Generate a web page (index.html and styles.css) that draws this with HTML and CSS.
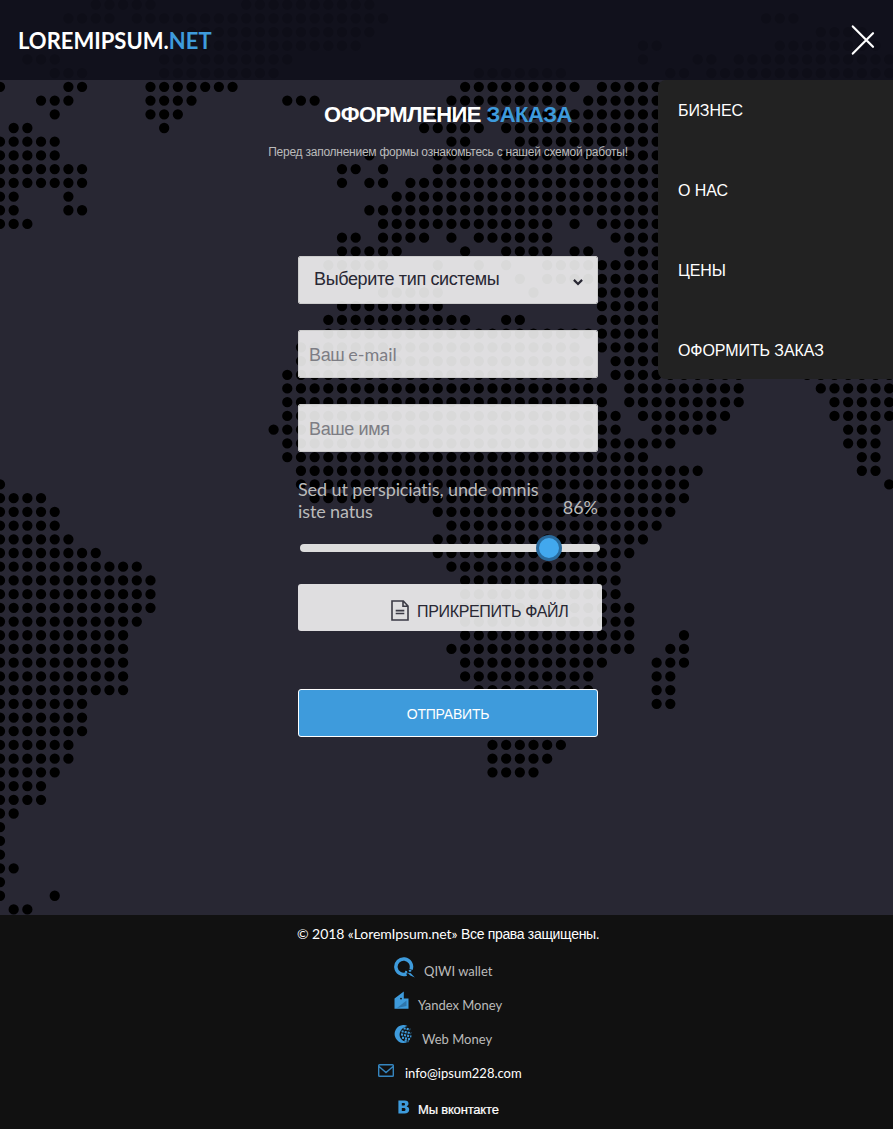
FILE: index.html
```html
<!DOCTYPE html>
<html lang="ru">
<head>
<meta charset="utf-8">
<title>LoremIpsum.net</title>
<link rel="stylesheet" href="styles.css">
</head>
<body>
<div class="page">
  <!-- Dotted world map: one unit per dot, every subpath is a run of dots -->
  <svg class="map" width="893" height="915" aria-hidden="true">
    <g transform="translate(0 4.6) scale(13.68 13.71)">
      <path d="M7 0h4.1M18 0h9.1M5 1h3.1M10 1h18.1M56 1h2.1M14 2h13.1M60 2h3.1M15 3h11.1M47 3h1.1M57 3h7.1M2 4h2.1M12 4h9.1M47 4h.1M51 4h1.1M54 4h11.1M4 5h2.1M12 5h8.1M35 5h6.1M49 5h1.1M52 5h13.1
      M0 6h.1M5 6h1.1M11 6h6.1M34 6h8.1M44 6h4.1
      M3 7h2.1M11 7h3.1M21 7h2.1M33 7h8.1M43 7h5.1
      M4 8h.1M11 8h2.1M32 8h2.1M36 8h12.1
      M1 9h1.1M12 9h.1M31 9h4.1M37 9h11.1
      M0 10h4.1M33 10h1.1M38 10h10.1
      M0 11h4.1M27 11h.1M32 11h2.1M37 11h11.1
      M0 12h6.1M25 12h1.1M28 12h.1M32 12h16.1
      M0 13h6.1M25 13h.1M27 13h1.1M30 13h18.1
      M0 14h1.1M5 14h.1M29 14h19.1
      M0 15h1.1M5 15h1.1M27 15h21.1
      M0 16h2.1M28 16h12.1M42 16h.1M44 16h4.1
      M25 17h1.1M28 17h3.1M33 17h.1M35 17h5.1M45 17h3.1
      M25 18h4.1M34 18h.1M37 18h3.1M42 18h1.1M46 18h2.1
      M24 19h4.1M32 19h.1M35 19h.1M37 19h.1M40 19h8.1
      M38 20h.1M40 20h8.1
      M28 21h4.1M39 21h.1M44 21h4.1
      M25 22h7.1M44 22h4.1
      M24 23h10.1M37 23h1.1M44 23h4.1
      M24 24h24.1
      M22 25h20.1M44 25h4.1
      M22 26h21.1M45 26h3.1
      M21 27h22.1M45 27h9.1M59 27h6.1
      M21 28h23.1M46 28h8.1M60 28h5.1
      M21 29h23.1M46 29h8.1M61 29h4.1
      M21 30h24.1M47 30h6.1M61 30h4.1
      M20 31h25.1M48 31h4.1M62 31h2.1
      M21 32h28.1M62 32h2.1
      M21 33h26.1M63 33h1.1
      M22 34h29.1M63 34h1.1
      M0 35h.1M22 35h28.1M65 35h.1
      M0 36h3.1M23 36h4.1M30 36h20.1
      M0 37h4.1M32 37h17.1
      M0 38h4.1M33 38h15.1
      M0 39h5.1M32 39h15.1
      M0 40h7.1M32 40h14.1
      M0 41h10.1M33 41h12.1
      M0 42h11.1M34 42h11.1
      M0 43h11.1M34 43h11.1
      M0 44h11.1M34 44h12.1
      M0 45h10.1M34 45h12.1
      M0 46h9.1M34 46h12.1M50 46h.1
      M0 47h9.1M33 47h13.1M49 47h1.1
      M0 48h9.1M34 48h10.1M48 48h2.1
      M0 49h9.1M34 49h9.1M48 49h1.1
      M0 50h9.1M35 50h8.1M48 50h1.1
      M0 51h6.1M35 51h8.1M48 51h1.1
      M0 52h6.1M0 53h6.1
      M0 54h5.1M36 54h5.1
      M0 55h5.1M36 55h4.1
      M0 56h4.1M36 56h3.1
      M0 57h3.1M0 58h3.1M0 59h1.1M0 60h.1M0 61h.1M0 62h.1M0 63h1.1M0 64h.1M0 65h.1M4 65h.1M1 66h1.1"/>
    </g>
  </svg>

  <header class="header">
    <a class="logo">LOREMIPSUM.<span class="accent">NET</span></a>
    <svg class="close" width="24" height="32" viewBox="0 0 24 32"><path d="M1.8 2.4 22 22.8M1.8 29.6 22 9.2"/></svg>
    <nav class="menu">
      <a>БИЗНЕС</a>
      <a>О НАС</a>
      <a>ЦЕНЫ</a>
      <a>ОФОРМИТЬ ЗАКАЗ</a>
    </nav>
  </header>

  <main class="order">
    <h1 class="title">ОФОРМЛЕНИЕ <span class="accent">ЗАКАЗА</span></h1>
    <p class="subtitle">Перед заполнением формы ознакомьтесь с нашей схемой работы!</p>
    <form class="form">
      <div class="field select"><span class="select-text">Выберите тип системы</span>
        <svg width="12" height="9" viewBox="0 0 12 9"><path d="M1.9 1.9 6 6 10.1 1.9"/></svg></div>
      <div class="field input"><span class="cyr">Ваш</span> <span class="lat-mail">e-mail</span></div>
      <div class="field input"><span class="cyr">Ваше имя</span></div>
      <div class="range-head"><span class="range-label">Sed ut perspiciatis, unde omnis<br>iste natus</span><span class="range-value">86%</span></div>
      <div class="track"><span class="thumb"></span></div>
      <div class="attach">
        <svg width="18" height="21" viewBox="0 0 18 21"><path d="M1 1h11.3L17 6v14H1zM12 1v5.3h5M4.7 10.6h8.6M4.7 13.5h8.6"/></svg>
        <span>ПРИКРЕПИТЬ ФАЙЛ</span>
      </div>
      <div class="submit"><span>ОТПРАВИТЬ</span></div>
    </form>
  </main>

  <footer class="footer">
    <p class="copy">© 2018 «LoremIpsum.net» <span class="copy-cyr">Все права защищены.</span></p>
    <div class="row qiwi">
      <svg width="21" height="21" viewBox="0 0 21 21"><path class="ring" d="M12.4 17A7.8 7.8 0 1 1 17 12.400"/><path class="fill" d="M11 13.800l2 .3.5 2.700-2.200-.6zM14.500 13l3-.5-.3 2-1.700.5zM13.600 15.700l3.200.5 4 4.200-4.500-2z"/></svg>
      <span>QIWI wallet</span>
    </div>
    <div class="row yandex">
      <svg width="15" height="19" viewBox="0 0 15 19"><path class="fill" d="M.5 7.400 9.800.4v7h4.700v10.400H.5z"/><path class="shade" d="M3 17 12.500 9.500v5.500z"/><circle class="hole" cx="7" cy="7.600" r=".9"/></svg>
      <span>Yandex Money</span>
    </div>
    <div class="row webmoney">
      <svg width="19" height="19" viewBox="0 0 19 19"><path class="fill" d="M13.500.9A9 9 0 1 0 13.500 17.100C9 16.800 5.200 13.500 5.600 9.200 6 5 9 2.200 13.500.9z"/><path class="grid" d="M9.600 3.300l6.600 1.300M7.600 6.300l9.600 2M7 9.400l10.400 2.100M8 12.600l8 1.600M10.600 15.500l4 .8"/></svg>
      <span>Web Money</span>
    </div>
    <div class="row mail">
      <svg width="16" height="13" viewBox="0 0 16 13"><path d="M1.500.7h13q.8 0 .8.8v10q0 .8-.8.8h-13q-.8 0-.8-.8v-10q0-.8.8-.8zM1 2.500l7 6 7-6"/></svg>
      <span>info@ipsum228.com</span>
    </div>
    <div class="row vk">
      <svg width="12" height="14" viewBox="0 0 12 14"><path class="fill" fill-rule="evenodd" d="M.4.5h6.400c2.500 0 3.700 1.200 3.700 3.100 0 1.400-.7 2.300-1.900 2.800 1.700.4 2.600 1.500 2.600 3.200 0 2.600-1.800 3.900-4.600 3.900H.4zM3.800 3v2.600h1.700c1 0 1.500-.5 1.500-1.300S6.500 3 5.500 3zm0 4.900v3h2c1.100 0 1.700-.5 1.700-1.500s-.6-1.500-1.700-1.500z"/></svg>
      <span>Мы вконтакте</span>
    </div>
  </footer>
</div>
</body>
</html>
```
FILE: styles.css
```css
* { box-sizing: border-box; }
body {
  margin: 0;
  background: #282733;
  font-family: Lato, "Liberation Sans", sans-serif;
  color: #fff;
}
.page { position: relative; width: 893px; height: 1129px; overflow: hidden; display: flex; flex-direction: column; }
.map { position: absolute; left: 0; top: 0; }
.map path { fill: none; stroke: #000; stroke-width: .75; stroke-linecap: round; stroke-dasharray: 0 1; }
.accent { color: #3e9bdc; }

.header {
  position: relative;
  z-index: 2;
  flex: none;
  height: 80px;
  padding: 0 18px;
  display: flex;
  align-items: center;
  justify-content: space-between;
  background: rgba(15, 15, 26, .92);
}
.logo { padding-top: 1px; font-size: 22px; font-weight: 700; line-height: 26px; white-space: nowrap; }
.close path { fill: none; stroke: #fff; stroke-width: 2.2; stroke-linecap: round; }
.menu {
  position: absolute;
  right: 0;
  top: 80px;
  width: 235px;
  height: 299px;
  padding: 21px 0 0 20px;
  background: #222;
  border-radius: 8px 0 0 8px;
  font: 16px/20px "Liberation Sans", sans-serif;
  letter-spacing: -.08px;
  display: flex;
  flex-direction: column;
  gap: 60px;
}
.menu a { white-space: nowrap; }

.order { position: relative; flex: none; height: 835px; }
.title {
  margin: 0;
  padding: 22px 0 0 3px;
  font: 700 22px/26px "Liberation Sans", sans-serif;
  letter-spacing: -.54px;
  text-align: center;
}
.subtitle {
  margin: 16px 0 0;
  padding-left: 3px;
  font: 12px/16px "Liberation Sans", sans-serif;
  letter-spacing: -.25px;
  color: #bbb;
  text-align: center;
}
.form { width: 300px; margin: 96px 0 0 298px; }
.field {
  height: 48px;
  margin-bottom: 26px;
  border: 1px solid #ccc;
  border-radius: 2px;
  background: rgba(255, 255, 255, .85);
  background-clip: padding-box;
  display: flex;
  align-items: center;
  font-size: 18px;
  line-height: 22px;
  white-space: nowrap;
}
.select { justify-content: space-between; padding: 0 13px 2px 15px; color: #282733; }
.select svg { margin-top: 6px; }
.select path { fill: none; stroke: #282733; stroke-width: 2.2; }
.select-text, .cyr { font-family: "Liberation Sans", sans-serif; letter-spacing: -.37px; }
.input { padding-left: 10px; gap: 4px; color: #7d7d84; }
.input .cyr { padding-top: 2px; }
.range-head {
  display: flex;
  justify-content: space-between;
  align-items: flex-end;
  color: #bbb;
  font-size: 18px;
  line-height: 22px;
  height: 44px;
  white-space: nowrap;
}
.range-label { font-variant-ligatures: none; letter-spacing: -.11px; }
.range-value { margin-bottom: 4px; }
.track { width: 300px; height: 8px; margin: 22px 0 0 2px; border-radius: 4px; background: #ddd; display: flex; align-items: center; }
.thumb { flex: none; width: 26px; height: 26px; margin-left: 236px; border: 3px solid #2a6a9c; border-radius: 50%; background: #42a8ee; }
.attach {
  width: 304px;
  height: 47px;
  margin-top: 32px;
  padding: 6px 0 0 93px;
  border-radius: 3px;
  background: rgba(255, 255, 255, .85);
  color: #282733;
  display: flex;
  align-items: center;
  gap: 8px;
  font: 16px/20px "Liberation Sans", sans-serif;
  letter-spacing: -.34px;
  white-space: nowrap;
}
.attach span { padding-top: 2px; }
.attach path { fill: none; stroke: #3b3a45; stroke-width: 1.6; }
.submit {
  height: 48px;
  margin-top: 58px;
  padding-top: 2px;
  border: 1px solid #fff;
  border-radius: 3px;
  background: #3e9bdc;
  display: flex;
  align-items: center;
  justify-content: center;
  font: 14px/18px "Liberation Sans", sans-serif;
  letter-spacing: -.2px;
}

.footer { position: relative; flex: none; height: 214px; background: #111; font-size: 13px; }
.copy { margin: 0; padding: 10px 0 0 297px; font-size: 14px; line-height: 18px; letter-spacing: -.07px; white-space: nowrap; }
.copy-cyr, .vk span { font-family: "Liberation Sans", sans-serif; letter-spacing: -.32px; }
.row { display: flex; align-items: flex-start; height: 34px; line-height: 18px; white-space: nowrap; color: #bbb; }
.row svg { flex: none; }
.row span { margin-top: 5px; }
.fill { fill: #3e9bdc; }
.ring { fill: none; stroke: #3e9bdc; stroke-width: 3.5; }
.shade { fill: #2e76ac; }
.hole { fill: #111; }
.grid { fill: none; stroke: #3e9bdc; stroke-width: 2.1; stroke-dasharray: 2.1 1; }
.qiwi { margin-top: 14px; padding-left: 394px; gap: 9px; }
.yandex { padding-left: 394px; gap: 9px; }
.webmoney { padding-left: 394px; gap: 9px; }
.mail { padding-left: 378px; gap: 11px; color: #fff; }
.mail svg { margin-top: 5px; }
.mail path { fill: none; stroke: #3585bf; stroke-width: 1.4; }
.vk { padding-left: 398px; gap: 8px; color: #fff; }
.vk svg { margin-top: 7px; }
.row.vk span { margin-top: 8px; letter-spacing: -.18px; -webkit-text-stroke: .2px #fff; }
```
